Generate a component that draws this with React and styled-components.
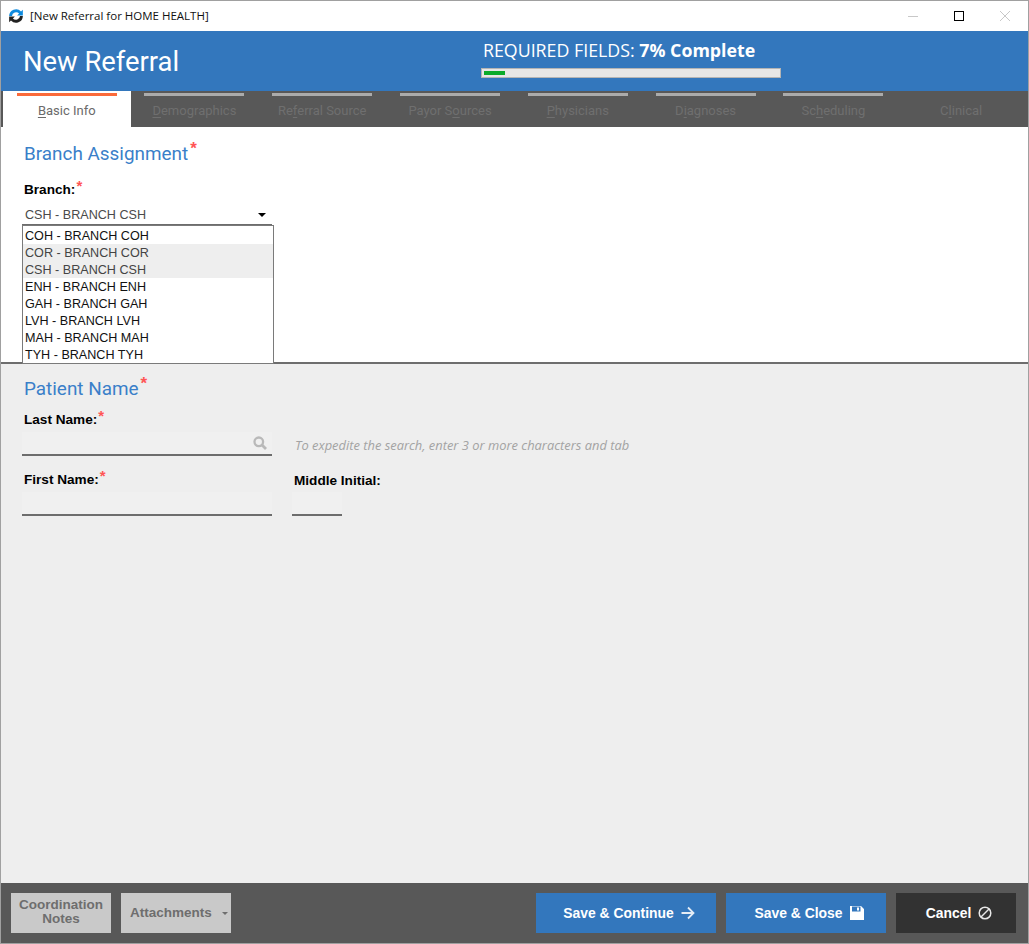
import React from 'react'
import styled, {createGlobalStyle} from 'styled-components'

const GlobalStyle = createGlobalStyle`
  html, body {
    margin: 0;
    padding: 0;
    background: #fff;
  }
  * {
    box-sizing: border-box;
  }
`

const Win = styled.div`
  width: 1029px;
  height: 944px;
  border: 1px solid #a0a0a0;
  display: flex;
  flex-direction: column;
  position: relative;
  overflow: hidden;
  background: #fff;
  font-family: 'Liberation Sans', Arial, sans-serif;
`

const TitleBar = styled.div`
  height: 30px;
  flex-shrink: 0;
  display: flex;
  align-items: center;
  padding-left: 7px;
  background: #fff;
`

const TitleText = styled.span`
  margin: 0 0 2px 6px;
  font-family: 'Open Sans', sans-serif;
  font-size: 11.5px;
  color: #111;
`

const WinControls = styled.div`
  margin-left: auto;
  display: flex;
  align-items: center;
`

const WinBtn = styled.div`
  width: 46px;
  height: 30px;
  display: flex;
  align-items: center;
  justify-content: center;
`

const Header = styled.div`
  height: 60px;
  flex-shrink: 0;
  background: #3377bd;
  display: flex;
  position: relative;
  padding-left: 22px;
`

const PageTitle = styled.h1`
  margin: 13px 0 0;
  font-family: Roboto, sans-serif;
  font-weight: 400;
  font-size: 27.4px;
  line-height: 36px;
  color: #fff;
  width: 458px;
  white-space: nowrap;
`

const Progress = styled.div`
  width: 300px;
  padding-top: 6px;
`

const ProgressLabel = styled.div`
  font-family: 'Open Sans', sans-serif;
  font-size: 17.8px;
  line-height: 26px;
  padding-left: 2px;
  color: #fff;
  white-space: nowrap;
  b {
    font-weight: 700;
  }
`

const ProgressTrack = styled.div`
  margin-top: 5px;
  height: 10px;
  background: #e6e6e6;
  border: 1px solid #b4b4b4;
  padding: 2px;
`

const ProgressFill = styled.div`
  height: 4px;
  background: #0aaa2a;
`

const Tabs = styled.div`
  height: 36px;
  flex-shrink: 0;
  background: #585858;
  display: flex;
  padding-left: 2px;
`

const Tab = styled.div`
  width: ${p => (p.$active ? 127.5 : 127.8)}px;
  flex-shrink: 0;
  height: 36px;
  padding-top: 2px;
  display: flex;
  flex-direction: column;
  align-items: center;
  background: ${p => (p.$active ? '#fff' : 'transparent')};
  color: ${p => (p.$active ? '#6a6a6a' : '#6f6f6f')};
  font-family: Roboto, sans-serif;
  font-size: 13px;
  u {
    text-underline-offset: 2px;
    text-decoration-thickness: 1px;
  }
`

const TabBar = styled.div`
  width: 100px;
  height: 3px;
  flex-shrink: 0;
  background: ${p => (p.$active ? '#fb6a3a' : p.$hidden ? 'transparent' : '#ababab')};
`

const TabLabel = styled.div`
  margin-top: 5px;
  line-height: 20px;
`

const BranchSection = styled.section`
  height: 237px;
  flex-shrink: 0;
  background: #fff;
  border-bottom: 2px solid #6d6d6d;
  padding: 14px 21px 0;
`

const NameSection = styled.section`
  flex: 1;
  background: #eee;
  padding: 12px 21px 0;
`

const SectionTitle = styled.h2`
  margin: 0;
  font-family: Roboto, sans-serif;
  font-weight: 400;
  font-size: 18.9px;
  line-height: 25px;
  color: #3a7fc9;
  padding-left: 2px;
  height: 25px;
`

const Req = styled.span`
  color: #f55;
  font-family: 'Liberation Sans', sans-serif;
  font-size: ${p => p.$size || 15}px;
  font-weight: 700;
  line-height: 0;
  position: relative;
  top: ${p => p.$top || -3}px;
  margin-left: ${p => p.$ml || 1}px;
  letter-spacing: 0;
`

const Label = styled.div`
  font-size: 13.6px;
  font-weight: 700;
  line-height: 15px;
  height: 15px;
  color: #000;
  padding-left: 2px;
  white-space: nowrap;
`

const SelectValue = styled.div`
  margin-top: 9px;
  width: 250px;
  height: 20px;
  border-bottom: 2px solid #6d6d6d;
  display: flex;
  align-items: center;
  justify-content: space-between;
  padding: 0 6px 0 3px;
  font-size: 12.6px;
  color: #4a4a4a;
`

const Caret = styled.span`
  width: 0;
  height: 0;
  border-left: 4px solid transparent;
  border-right: 4px solid transparent;
  border-top: 4px solid #000;
`

const Dropdown = styled.div`
  position: absolute;
  left: 21px;
  top: 224px;
  width: 252px;
  height: 139px;
  background: #fff;
  border: 1px solid #7a7a7a;
  z-index: 5;
  padding-top: 1px;
`

const Option = styled.div`
  height: 17px;
  line-height: 19px;
  padding-left: 2px;
  font-size: 12.6px;
  color: ${p => (p.$muted ? '#444' : '#111')};
  background: ${p => (p.$muted ? '#eee' : '#fff')};
  white-space: nowrap;
`

const FieldRow = styled.div`
  display: flex;
  align-items: flex-end;
  margin-top: ${p => p.$mt || 0}px;
`

const Field = styled.div`
  width: ${p => p.$w}px;
  margin-right: ${p => p.$mr || 0}px;
  flex-shrink: 0;
`

const Input = styled.div`
  margin-top: ${p => p.$mt || 5}px;
  height: 24px;
  background: #f0f0f0;
  border-bottom: 2px solid #6d6d6d;
  display: flex;
  align-items: center;
  justify-content: flex-end;
  padding-right: 5px;
`

const Hint = styled.div`
  font-family: 'Open Sans', sans-serif;
  font-style: italic;
  font-size: 12.9px;
  color: #a3a3a3;
  padding: 0 0 1px 3px;
  line-height: 20px;
  white-space: nowrap;
`

const Footer = styled.div`
  height: 60px;
  flex-shrink: 0;
  background: #585858;
  display: flex;
  align-items: center;
  padding: 0 12px 0 10px;
  gap: 10px;
`

const GhostBtn = styled.div`
  width: ${p => p.$w}px;
  height: 40px;
  background: #c9c9c9;
  color: #6e6e6e;
  font-size: 13.5px;
  font-weight: 700;
  line-height: 14px;
  padding-bottom: ${p => (p.$tight ? 3 : 0)}px;
  text-align: center;
  display: flex;
  align-items: center;
  justify-content: center;
`

const SmallCaret = styled.span`
  width: 0;
  height: 0;
  margin: 0 -6px 0 10px;
  border-left: 3px solid transparent;
  border-right: 3px solid transparent;
  border-top: 3px solid #6e6e6e;
`

const Spacer = styled.div`
  flex: 1;
`

const ActionBtn = styled.div`
  width: ${p => p.$w}px;
  height: 40px;
  padding-left: 6px;
  background: ${p => (p.$dark ? '#323232' : '#3377bd')};
  color: #fff;
  font-size: 13.9px;
  font-weight: 700;
  display: flex;
  align-items: center;
  justify-content: center;
  gap: 7px;
`

const tabs = [
  ['', 'B', 'asic Info'],
  ['', 'D', 'emographics'],
  ['Re', 'f', 'erral Source'],
  ['Payor S', 'o', 'urces'],
  ['', 'P', 'hysicians'],
  ['D', 'i', 'agnoses'],
  ['Sc', 'h', 'eduling'],
  ['C', 'l', 'inical'],
]

const branches = [
  ['COH - BRANCH COH'],
  ['COR - BRANCH COR', true],
  ['CSH - BRANCH CSH', true],
  ['ENH - BRANCH ENH'],
  ['GAH - BRANCH GAH'],
  ['LVH - BRANCH LVH'],
  ['MAH - BRANCH MAH'],
  ['TYH - BRANCH TYH'],
]

const AppLogo = () => (
  <svg width="16" height="16" viewBox="1.5 1.5 14 14">
    <path d="M2.500 8.500a6 6 0 0 1 10.400-4L14.500 3v5h-5l1.700-1.700a3.600 3.600 0 0 0-6.200 2.200z" fill="#0e8ade" />
    <path d="M14.500 8.500a6 6 0 0 1-10.400 4L2.500 14V9h5l-1.700 1.700a3.600 3.600 0 0 0 6.200-2.200z" fill="#222" />
  </svg>
)

const SearchIcon = () => (
  <svg width="14" height="14" viewBox="0 0 14 14" fill="none" stroke="#b9b9b9" strokeWidth="2.300">
    <circle cx="5.800" cy="5.800" r="4.300" />
    <path d="M9 9l4 4" strokeWidth="2.800" />
  </svg>
)

const ArrowIcon = () => (
  <svg width="14" height="14" viewBox="0 0 14 14" fill="none" stroke="#e4ecf5" strokeWidth="1.800">
    <path d="M0.500 7h12M7 1.500L12.500 7 7 12.500" />
  </svg>
)

const SaveIcon = () => (
  <svg width="14" height="14" viewBox="0 0 14 14">
    <path fillRule="evenodd" fill="#fff" d="M0 0h11l3 3v11H0zM2 0.500v5h8.500v-5zM7 1.500h2v3H7z" />
  </svg>
)

const BanIcon = () => (
  <svg width="14" height="14" viewBox="0 0 14 14" fill="none" stroke="#e8e8e8" strokeWidth="1.500">
    <circle cx="7" cy="7" r="5.800" />
    <path d="M3 11L11 3" />
  </svg>
)

export default function App() {
  return (
    <Win>
      <GlobalStyle />
      <TitleBar>
        <AppLogo />
        <TitleText>[New Referral for HOME HEALTH]</TitleText>
        <WinControls>
          <WinBtn>
            <svg width="10" height="10"><path d="M0 5.500h10" stroke="#c8c8c8" /></svg>
          </WinBtn>
          <WinBtn>
            <svg width="10" height="10"><rect x="0.500" y="0.500" width="9" height="9" fill="none" stroke="#000" /></svg>
          </WinBtn>
          <WinBtn>
            <svg width="10" height="10"><path d="M0 0l10 10M10 0L0 10" stroke="#c8c8c8" /></svg>
          </WinBtn>
        </WinControls>
      </TitleBar>

      <Header>
        <PageTitle>New Referral</PageTitle>
        <Progress>
          <ProgressLabel>REQUIRED FIELDS: <b>7% Complete</b></ProgressLabel>
          <ProgressTrack><ProgressFill style={{width: '7%'}} /></ProgressTrack>
        </Progress>
      </Header>

      <Tabs>
        {tabs.map(([before, key, after], i) => (
          <Tab key={key + after} $active={i === 0}>
            <TabBar $active={i === 0} $hidden={i === 7} />
            <TabLabel>{before}<u>{key}</u>{after}</TabLabel>
          </Tab>
        ))}
      </Tabs>

      <BranchSection>
        <SectionTitle>Branch Assignment<Req $size={17} $top={-6} $ml={2}>*</Req></SectionTitle>
        <Label style={{marginTop: 16}}>Branch:<Req>*</Req></Label>
        <SelectValue>CSH - BRANCH CSH<Caret /></SelectValue>
      </BranchSection>

      <Dropdown>
        {branches.map(([name, muted]) => (
          <Option key={name} $muted={muted}>{name}</Option>
        ))}
      </Dropdown>

      <NameSection>
        <SectionTitle>Patient Name<Req $size={17} $top={-6} $ml={2}>*</Req></SectionTitle>
        <FieldRow $mt={11}>
          <Field $w={250} $mr={20}>
            <Label>Last Name:<Req>*</Req></Label>
            <Input><SearchIcon /></Input>
          </Field>
          <Hint>To expedite the search, enter 3 or more characters and tab</Hint>
        </FieldRow>
        <FieldRow $mt={16}>
          <Field $w={250} $mr={20}>
            <Label>First Name:<Req>*</Req></Label>
            <Input />
          </Field>
          <Field $w={50}>
            <Label>Middle Initial:</Label>
            <Input $mt={4} />
          </Field>
        </FieldRow>
      </NameSection>

      <Footer>
        <GhostBtn $w={100} $tight>Coordination<br />Notes</GhostBtn>
        <GhostBtn $w={110}>Attachments<SmallCaret /></GhostBtn>
        <Spacer />
        <ActionBtn $w={180}>Save &amp; Continue <ArrowIcon /></ActionBtn>
        <ActionBtn $w={160}>Save &amp; Close <SaveIcon /></ActionBtn>
        <ActionBtn $w={120} $dark>Cancel <BanIcon /></ActionBtn>
      </Footer>
    </Win>
  )
}
